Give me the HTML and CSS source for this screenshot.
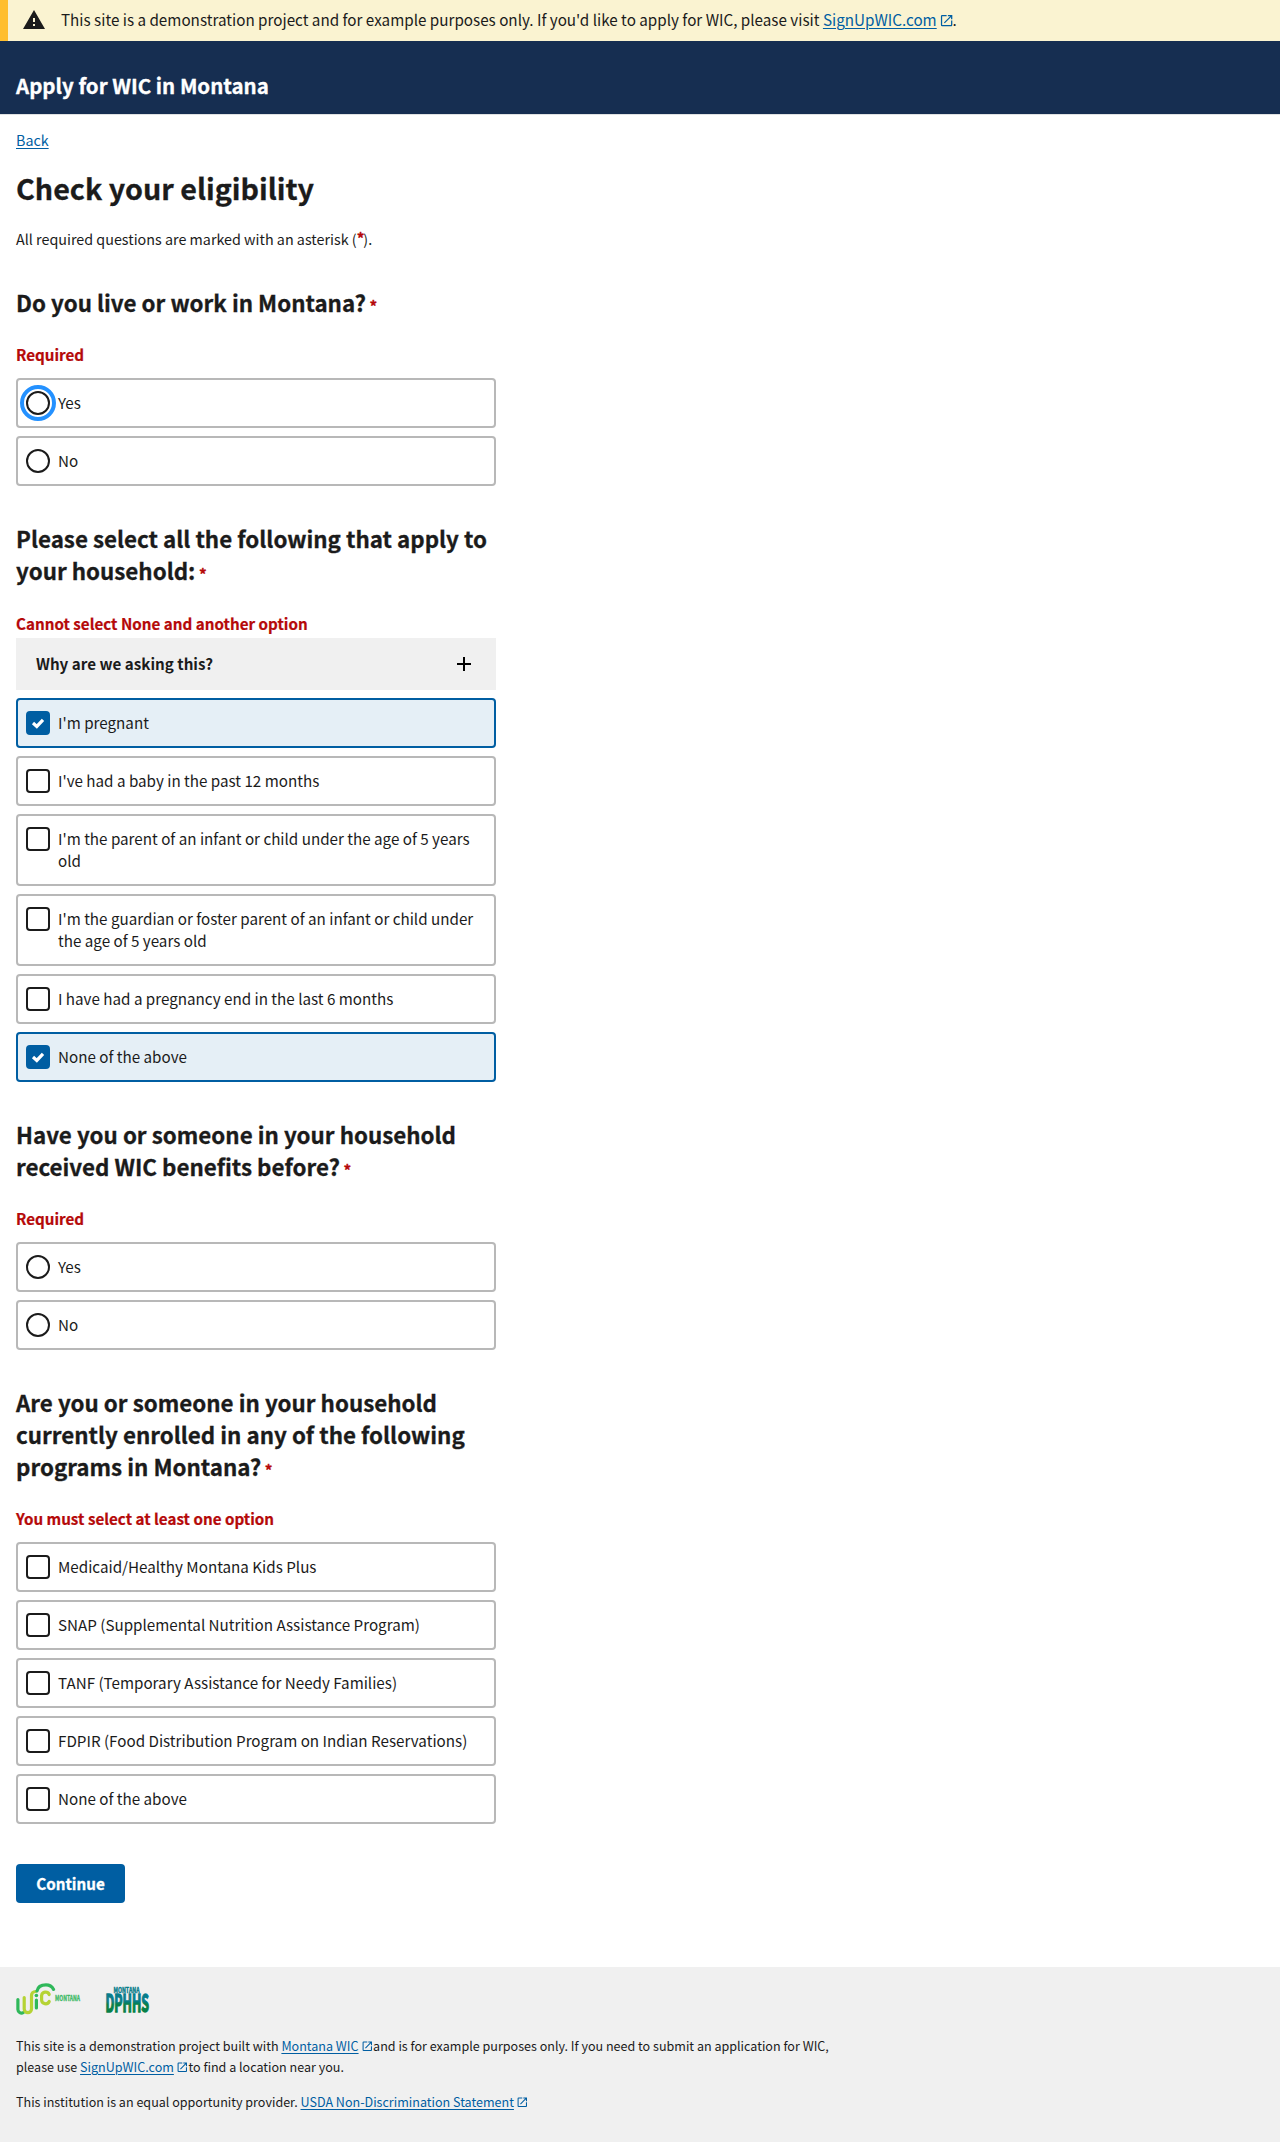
FILE: index.html
```html
<!DOCTYPE html>
<html lang="en">
<head>
<meta charset="utf-8">
<title>Check your eligibility</title>
<link rel="stylesheet" href="styles.css">
</head>
<body>
<svg class="sprite" aria-hidden="true">
  <symbol id="launch" viewBox="0 0 24 24"><path d="M19 19H5V5h7V3H5a2 2 0 0 0-2 2v14a2 2 0 0 0 2 2h14c1.1 0 2-.9 2-2v-7h-2v7zM14 3v2h3.59l-9.83 9.83 1.41 1.41L19 6.41V10h2V3h-7z"/></symbol>
</svg>

<aside class="banner">
  <svg class="banner-icon" viewBox="0 0 24 24"><path d="M1 21h22L12 2 1 21zm12-3h-2v-2h2v2zm0-4h-2v-4h2v4z"/></svg>
  <p class="banner-text">This site is a demonstration project and for example purposes only. If you'd like to apply for WIC, please visit <a href="#">SignUpWIC.com</a><svg class="launch"><use href="#launch"/></svg>.</p>
</aside>

<header class="header">Apply for WIC in Montana</header>

<main class="main">
  <a class="back" href="#">Back</a>
  <h1>Check your eligibility</h1>
  <p class="intro">All required questions are marked with an asterisk (<abbr>*</abbr>).</p>

  <form class="form">
    <section class="question">
      <h2>Do you live or work in Montana? <abbr>*</abbr></h2>
      <p class="error">Required</p>
      <div class="options">
        <label class="tile"><input class="radio focused" type="radio" name="live"><span>Yes</span></label>
        <label class="tile"><input class="radio" type="radio" name="live"><span>No</span></label>
      </div>
    </section>

    <section class="question question-household">
      <h2>Please select all the following that apply to your household: <abbr>*</abbr></h2>
      <p class="error">Cannot select None and another option</p>
      <button class="accordion" type="button"><span>Why are we asking this?</span>
        <svg class="plus" viewBox="0 0 24 24"><path d="M19 13h-6v6h-2v-6H5v-2h6V5h2v6h6v2z"/></svg>
      </button>
      <div class="options">
        <label class="tile checked"><input class="checkbox" type="checkbox" checked><svg class="tick" viewBox="0 0 24 24"><path d="M7 12l3.800 3.400 6.200-6.600"/></svg><span>I'm pregnant</span></label>
        <label class="tile"><input class="checkbox" type="checkbox"><span>I've had a baby in the past 12 months</span></label>
        <label class="tile"><input class="checkbox" type="checkbox"><span>I'm the parent of an infant or child under the age of 5 years old</span></label>
        <label class="tile"><input class="checkbox" type="checkbox"><span>I'm the guardian or foster parent of an infant or child under the age of 5 years old</span></label>
        <label class="tile"><input class="checkbox" type="checkbox"><span>I have had a pregnancy end in the last 6 months</span></label>
        <label class="tile checked"><input class="checkbox" type="checkbox" checked><svg class="tick" viewBox="0 0 24 24"><path d="M7 12l3.800 3.400 6.200-6.600"/></svg><span>None of the above</span></label>
      </div>
    </section>

    <section class="question">
      <h2>Have you or someone in your household received WIC benefits before? <abbr>*</abbr></h2>
      <p class="error">Required</p>
      <div class="options">
        <label class="tile"><input class="radio" type="radio" name="before"><span>Yes</span></label>
        <label class="tile"><input class="radio" type="radio" name="before"><span>No</span></label>
      </div>
    </section>

    <section class="question">
      <h2>Are you or someone in your household currently enrolled in any of the following programs in Montana? <abbr>*</abbr></h2>
      <p class="error">You must select at least one option</p>
      <div class="options">
        <label class="tile"><input class="checkbox" type="checkbox"><span>Medicaid/Healthy Montana Kids Plus</span></label>
        <label class="tile"><input class="checkbox" type="checkbox"><span>SNAP (Supplemental Nutrition Assistance Program)</span></label>
        <label class="tile"><input class="checkbox" type="checkbox"><span>TANF (Temporary Assistance for Needy Families)</span></label>
        <label class="tile"><input class="checkbox" type="checkbox"><span>FDPIR (Food Distribution Program on Indian Reservations)</span></label>
        <label class="tile"><input class="checkbox" type="checkbox"><span>None of the above</span></label>
      </div>
    </section>

    <button class="continue" type="button">Continue</button>
  </form>
</main>

<footer class="footer">
  <div class="logos">
    <svg class="logo-wic" viewBox="0 0 64 32">
      <g fill="none" stroke-width="3.2" stroke-linecap="round">
        <path stroke="#2fb85a" d="M1.9 16.500V26.500a3.600 3.600 0 0 0 5.500 3"/>
        <path stroke="#b5d334" d="M8.200 14.500V26a3.600 3.600 0 0 0 7.300 0V12.500a4 4 0 0 1 4-4"/>
        <path stroke="#2fb85a" d="M20.400 17V25M21 8C22 3 26 1.900 30 1.900c3.500 0 6 1.500 7.600 4.500"/>
        <path stroke="#b5d334" d="M33.200 11.500a4 4 0 0 0-7.600 1V17a4 4 0 0 0 7.600 1.500"/>
      </g>
      <circle cx="20.400" cy="12.500" r="1.800" fill="#2fb85a"/>
      <text x="39" y="18" class="logo-text" fill="#3dba66" stroke="#3dba66" stroke-width=".3" font-size="7" textLength="25" lengthAdjust="spacingAndGlyphs">MONTANA</text>
    </svg>
    <svg class="logo-dphhs" viewBox="0 0 45 32">
      <defs><linearGradient id="peak" gradientUnits="userSpaceOnUse" x1="0" y1="10" x2="0" y2="30"><stop offset=".4" stop-color="#087d8b"/><stop offset=".58" stop-color="#068048"/></linearGradient></defs>
      <text x="8.500" y="10" class="logo-text" fill="#087d8b" stroke="#087d8b" stroke-width=".4" font-size="7.200" textLength="26" lengthAdjust="spacingAndGlyphs">MONTANA</text>
      <text x="0.500" y="29" class="logo-text" fill="url(#peak)" stroke="url(#peak)" stroke-width="1.500" font-size="23.500" textLength="43.500" lengthAdjust="spacingAndGlyphs">DPHHS</text>
    </svg>
  </div>
  <p>This site is a demonstration project built with <a href="#">Montana WIC</a><svg class="launch"><use href="#launch"/></svg>and is for example purposes only. If you need to submit an application for WIC, please use <a href="#">SignUpWIC.com</a><svg class="launch"><use href="#launch"/></svg>to find a location near you.</p>
  <p>This institution is an equal opportunity provider. <a href="#">USDA Non-Discrimination Statement</a><svg class="launch"><use href="#launch"/></svg></p>
</footer>
</body>
</html>
```
FILE: styles.css
```css
* { box-sizing: border-box; }

body {
  margin: 0;
  background: #fff;
  color: #1b1b1b;
  font-family: "Source Sans Pro", "Noto Sans CJK SC", sans-serif;
  font-size: 15.2px;
  line-height: 22px;
}

h1, h2, p { margin: 0; }

a {
  color: #005ea2;
  text-decoration: underline;
  text-decoration-thickness: 1px;
  text-underline-offset: 2px;
}

abbr {
  color: #b50909;
  font-size: 15.2px;
  font-weight: 700;
  text-decoration: none;
  -webkit-text-stroke: 0.3px;
}

.sprite { display: none; }

.launch {
  width: 1em;
  height: 1em;
  margin-left: 2px;
  fill: #005ea2;
  vertical-align: -2px;
}

.banner {
  display: flex;
  align-items: flex-start;
  height: 41px;
  padding: 8px 0 0 14px;
  border-left: 8px solid #ffbe2e;
  background: #faf3d1;
}

.banner-icon {
  width: 24px;
  height: 24px;
  margin-right: 15px;
  fill: #1b1b1b;
}

.banner-text { font-size: 15.23px; }

.banner-text .launch { margin-right: -1.5px; }

.header {
  height: 74px;
  padding: 31px 16px 0;
  border-bottom: 1px solid #dfe1e2;
  background: #162e51;
  color: #fff;
  font-size: 20.5px;
  font-weight: 700;
  line-height: 27px;
  -webkit-text-stroke: 0.3px;
}

.main { padding: 15px 16px 64px; }

.back {
  display: block;
  width: fit-content;
  font-size: 14.3px;
  line-height: 20px;
}

h1 {
  margin-top: 20px;
  font-size: 28.7px;
  line-height: 36px;
  -webkit-text-stroke: 0.3px;
}

.intro {
  margin-top: 22px;
  font-size: 14.33px;
}

.intro abbr {
  margin-right: -1px;
  line-height: 1;
  vertical-align: 1px;
}

.form { width: 480px; }

.question { padding-top: 36px; }

h2 {
  font-size: 22.37px;
  line-height: 32px;
  -webkit-text-stroke: 0.3px;
}

h2 abbr {
  margin-left: -1.5px;
  line-height: 1;
}

.error {
  margin: 25px 0 13px;
  color: #b50909;
  font-weight: 700;
  -webkit-text-stroke: 0.2px;
}

.question-household .error { margin: 26px 0 4px; }

.accordion {
  display: flex;
  align-items: center;
  justify-content: space-between;
  width: 100%;
  height: 52px;
  margin-bottom: 8px;
  padding: 0 20px;
  border: 0;
  background: #f0f0f0;
  color: #1b1b1b;
  font: inherit;
  font-weight: 700;
}

.accordion span { padding-bottom: 2px; }

.plus {
  width: 24px;
  height: 24px;
  fill: #000;
}

.options {
  display: flex;
  flex-direction: column;
  gap: 8px;
}

.tile {
  position: relative;
  display: flex;
  align-items: flex-start;
  gap: 8px;
  min-height: 50px;
  padding: 11px 8px 13px;
  border: 2px solid #b8b8b8;
  border-radius: 4px;
}

.tile.checked {
  border-color: #005ea2;
  background: #e5eff6;
}

.radio, .checkbox {
  flex: none;
  width: 24px;
  height: 24px;
  margin: 0 0 -2px;
  border: 2px solid #1b1b1b;
  background: #fff;
  appearance: none;
}

.radio { border-radius: 50%; }

.radio.focused {
  outline: 4px solid #2491ff;
  outline-offset: 2px;
}

.checkbox { border-radius: 4px; }

.checkbox:checked {
  border-color: #005ea2;
  background: #005ea2;
}

.tick {
  position: absolute;
  top: 11px;
  left: 8px;
  width: 24px;
  height: 24px;
  fill: none;
  stroke: #fff;
  stroke-width: 3.2;
}

.continue {
  display: block;
  width: 109px;
  height: 39px;
  margin-top: 40px;
  padding: 0 0 2px;
  border: 0;
  border-radius: 4px;
  background: #005ea2;
  color: #fff;
  font: inherit;
  font-weight: 700;
  -webkit-text-stroke: 0.3px;
}

.footer {
  height: 175px;
  padding: 16px;
  background: #f0f0f0;
  font-size: 12.55px;
  line-height: 21px;
}

.footer p { max-width: 830px; }
.footer p + p { margin-top: 14px; }

.logos {
  display: flex;
  gap: 25px;
  height: 32px;
  margin-bottom: 20px;
}

.logo-wic, .logo-dphhs {
  height: 32px;
  overflow: visible;
}

.logo-wic { width: 64px; }
.logo-dphhs { width: 45px; }

.logo-text {
  font-family: "Noto Sans CJK SC", sans-serif;
  font-weight: 700;
}
```
